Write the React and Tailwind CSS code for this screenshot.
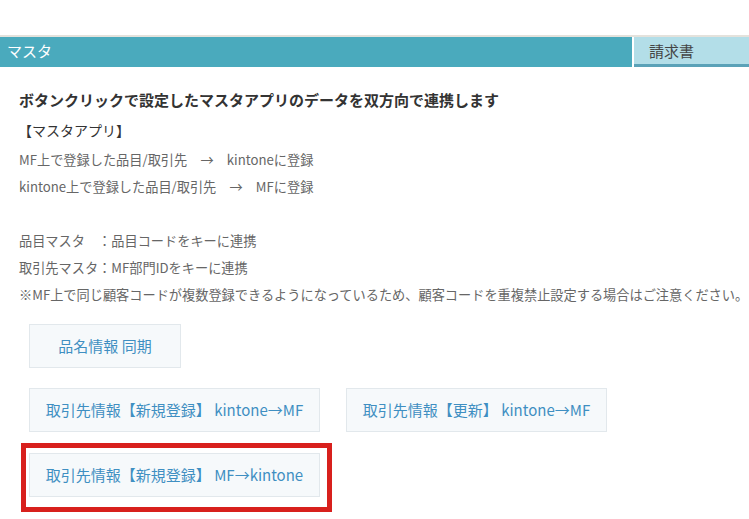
const font = { fontFamily: '"Noto Sans CJK JP", "Noto Sans", sans-serif' };

const SyncButton = ({ children, className = "" }) => {
  return (
    <button
      className={`h-[44px] bg-[#f6f9fb] border border-[#e2e8ec] text-[15px] text-[#3f8fc2] whitespace-nowrap ${className}`}
    >
      {children}
    </button>
  );
};

export default function App() {
  return (
    <div className="w-[749px] h-[519px] bg-white overflow-hidden" style={font}>
      {/* Tabs */}
      <div className="pt-[35px]">
        <div className="h-[2px] bg-[#e4e2dc]"></div>
        <div className="flex h-[30px]">
          <div className="w-[632px] bg-[#4aaabd] text-white text-[15px] leading-[28px] pl-[7px]">
            マスタ
          </div>
          <div className="w-[2px] bg-white"></div>
          <div className="flex-1 flex flex-col">
            <div className="flex-1 bg-[#b3dee8] text-[#444] text-[15px] leading-[27px] pl-[15px]">
              請求書
            </div>
            <div className="h-[3px] bg-[#5ba2b8]"></div>
          </div>
        </div>
      </div>

      {/* Body */}
      <div className="pl-[19px] pt-[19px]">
        <p className="text-[15px] font-bold text-[#333] leading-[28px]">
          ボタンクリックで設定したマスタアプリのデータを双方向で連携します
        </p>
        <p className="text-[14px] text-[#333] leading-[32px] -ml-[1px]">【マスタアプリ】</p>
        <div className="text-[13.2px] text-[#666] leading-[27px]">
          <p>MF上で登録した品目/取引先　→　kintoneに登録</p>
          <p>kintone上で登録した品目/取引先　→　MFに登録</p>
          <p>&nbsp;</p>
          <p>品目マスタ　：品目コードをキーに連携</p>
          <p>取引先マスタ：MF部門IDをキーに連携</p>
          <p className="whitespace-nowrap">
            ※MF上で同じ顧客コードが複数登録できるようになっているため、顧客コードを重複禁止設定する場合はご注意ください。
          </p>
        </div>

        {/* Buttons */}
        <div className="ml-[10px] mt-[16px] flex flex-col gap-[20px]">
          <div>
            <SyncButton className="w-[152px]">品名情報 同期</SyncButton>
          </div>
          <div className="flex gap-[26px]">
            <SyncButton className="w-[291px]">取引先情報【新規登録】 kintone→MF</SyncButton>
            <SyncButton className="w-[261px]">取引先情報【更新】 kintone→MF</SyncButton>
          </div>
          <div className="relative w-[291px] mt-[1px]">
            <SyncButton className="w-[291px]">取引先情報【新規登録】 MF→kintone</SyncButton>
            <div className="absolute left-[-8px] top-[-10px] w-[311px] h-[69px] border-[5px] border-[#d8201d] pointer-events-none"></div>
          </div>
        </div>
      </div>
    </div>
  );
}
